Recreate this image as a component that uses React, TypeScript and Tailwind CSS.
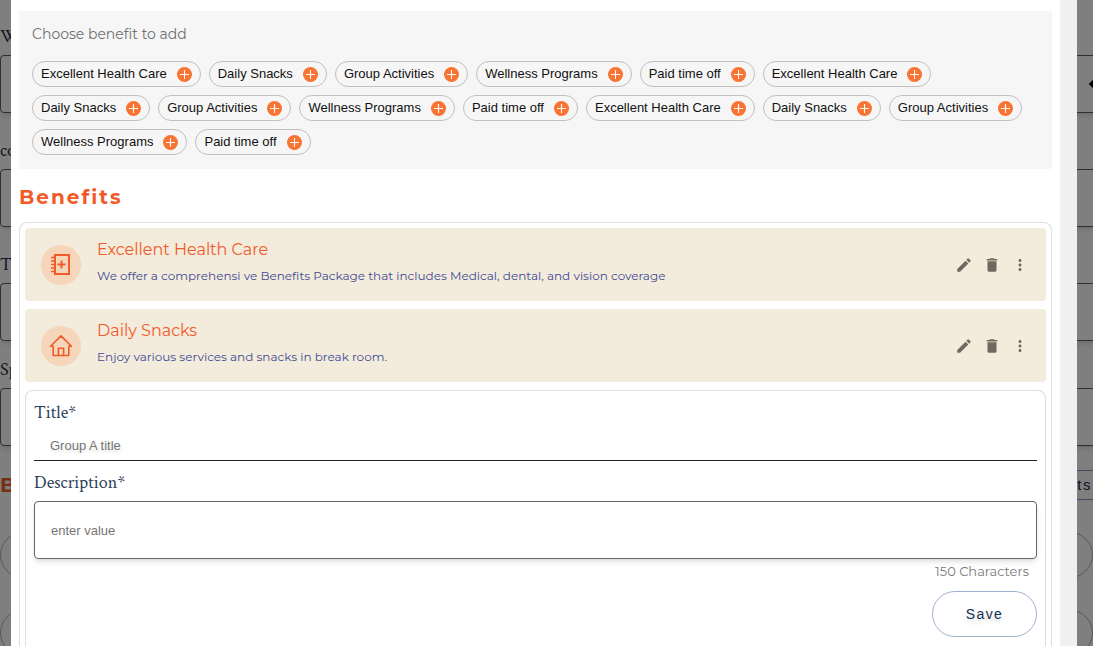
import type { ReactNode } from "react";
import { MdDelete, MdEdit, MdMoreVert } from "react-icons/md";

const display = "font-['Montserrat','Inter',sans-serif]";
const sans = "font-['Liberation_Sans',Arial,sans-serif]";
const serif = "font-['Crimson_Text','Crimson_Pro','Liberation_Serif',serif]";

const names = [
  "Excellent Health Care",
  "Daily Snacks",
  "Group Activities",
  "Wellness Programs",
  "Paid time off",
];
const choices = [...names, ...names, ...names];

function PlusDot() {
  return (
    <svg viewBox="0 0 15 15" className="size-[15px] shrink-0" aria-hidden="true">
      <circle cx="7.5" cy="7.5" r="7.5" fill="#f97432" />
      <path d="M7.5 3v9M3 7.5h9" stroke="#fff" strokeWidth="1.1" />
    </svg>
  );
}

function HealthBook() {
  return (
    <svg viewBox="0 0 24 24" className="size-6" fill="none" stroke="#f15a29" aria-hidden="true">
      <path d="M6 2h14v19H6z" strokeWidth="2" />
      <path d="M12.5 7.5v8M8.5 11.5h8" strokeWidth="1.9" />
      <path d="M2 4.5h4M2 8h4M2 11.5h4M2 15h4M2 18.5h4" strokeWidth="1.7" />
    </svg>
  );
}

function House() {
  return (
    <svg viewBox="0 0 24 24" className="size-6" fill="none" stroke="#f15a29" strokeWidth="1.6" aria-hidden="true">
      <path d="M4.2 12.2H1.6L12 1.9l10.4 10.3h-2.6v9.3H4.2z" strokeLinejoin="round" />
      <path d="M9.4 21.5v-7.3h5.2v7.3" />
    </svg>
  );
}

function BenefitCard({ icon, title, text }: { icon: ReactNode; title: string; text: string }) {
  return (
    <li className="flex items-center rounded bg-[#f3ebdb] py-2 pr-4 pl-4">
      <span className="flex size-10 shrink-0 items-center justify-center rounded-full bg-[#f5d6ba]">
        {icon}
      </span>
      <div className={`ml-4 flex-1 pb-1 ${display}`}>
        <h3 className="text-base leading-[27px] text-[#f15a29]">{title}</h3>
        <p className="text-xs leading-[26px] text-[#3f4b96]">{text}</p>
      </div>
      <div className="flex gap-2 text-[#6e6a62]">
        <button type="button" aria-label="Edit" className="p-px">
          <MdEdit className="size-[18px]" />
        </button>
        <button type="button" aria-label="Delete" className="p-px">
          <MdDelete className="size-[18px]" />
        </button>
        <button type="button" aria-label="More" className="p-px">
          <MdMoreVert className="size-[18px]" />
        </button>
      </div>
    </li>
  );
}

function PageField({ label, arrow }: { label: string; arrow?: boolean }) {
  return (
    <div>
      <div className={`h-8 text-lg leading-7 text-[#1b3049] ${serif}`}>{label}</div>
      <div className="-mr-4 flex h-[58px] items-center justify-end rounded border border-[#5f5f5f] bg-white pr-3 shadow-md">
        {arrow && <span className="size-1.5 rotate-45 bg-black" />}
      </div>
    </div>
  );
}

function Page() {
  return (
    <div className="flex flex-col bg-white pt-[23px]">
      <div className="flex flex-col gap-6">
        <PageField label="W" arrow />
        <PageField label="co" />
        <PageField label="Ty" />
      </div>
      <div className="mt-[15px]">
        <PageField label="Sp" />
      </div>
      <div className="mt-6 flex h-[30px] items-center justify-between">
        <span className={`text-xl font-bold text-[#f15a29] ${display}`}>B</span>
        <span className={`-mr-4 flex h-[30px] w-32 items-center justify-end border border-[#7d9cc0] pr-4 text-[15px] tracking-widest text-[#12304d] ${sans}`}>
          ts
        </span>
      </div>
      <div className="mt-8 h-[46px] rounded-full border border-[#b0b0b0]" />
      <div className="mt-8 h-[46px] rounded-full border border-[#b0b0b0]" />
    </div>
  );
}

export default function App() {
  return (
    <div className="relative h-screen overflow-hidden">
      <div aria-hidden="true">
        <Page />
      </div>
      <div className="absolute inset-0 flex bg-black/50 pr-4 pl-[11px]">
        <main className="flex flex-1 overflow-hidden bg-white">
          <div className="flex flex-1 flex-col px-2 pt-[11px]">
            <section className="bg-[#f6f6f6] px-[13px] pt-3 pb-3.5">
              <h2 className={`text-sm leading-[22px] text-[#707070] ${display}`}>
                Choose benefit to add
              </h2>
              <div className="mt-4 flex flex-wrap gap-2">
                {choices.map((name, i) => (
                  <button
                    key={i}
                    type="button"
                    className={`flex h-[26px] items-center gap-2.5 rounded-full border border-[#c0c0c0] px-2 text-[13px] text-[#111] ${sans}`}
                  >
                    {name}
                    <PlusDot />
                  </button>
                ))}
              </div>
            </section>

            <h1 className={`mt-[13px] mb-2.5 text-xl leading-[30px] font-bold tracking-widest text-[#f15a29] ${display}`}>
              Benefits
            </h1>

            <div className="flex flex-1 flex-col gap-2 rounded-t-lg border border-b-0 border-[#dedede] px-[5px] pt-[5px]">
              <ul className="flex flex-col gap-2">
                <BenefitCard
                  icon={<HealthBook />}
                  title="Excellent Health Care"
                  text="We offer a comprehensi ve Benefits Package that includes Medical, dental, and vision coverage"
                />
                <BenefitCard
                  icon={<House />}
                  title="Daily Snacks"
                  text="Enjoy various services and snacks in break room."
                />
              </ul>
              <form
                className="flex flex-1 flex-col rounded-t-lg border border-b-0 border-[#dedede] px-2 pt-2"
                onSubmit={(e) => e.preventDefault()}
              >
                <label htmlFor="title" className={`text-lg leading-7 text-[#2b4058] ${serif}`}>
                  Title*
                </label>
                <input
                  id="title"
                  placeholder="Group A title"
                  className={`h-[34px] border-b border-[#222] px-4 pt-1 text-[13px] outline-none text-shadow-[0_3px_6px_#00000029] placeholder:text-[#757575] ${sans}`}
                />
                <label htmlFor="description" className={`mt-2 text-lg leading-7 text-[#2b4058] ${serif}`}>
                  Description*
                </label>
                <textarea
                  id="description"
                  placeholder="enter value"
                  className={`mt-1 h-[58px] resize-none rounded border border-[#666] px-4 py-5 text-[13px] leading-[18px] shadow-md outline-none placeholder:text-[#757575] ${sans}`}
                />
                <p className={`pr-2 text-right text-[13px] leading-6 text-[#7a7a7a] ${display}`}>
                  150 Characters
                </p>
                <button
                  type="submit"
                  className={`mt-2 h-[46px] w-[105px] self-end rounded-full border border-[#9db2cf] text-sm tracking-widest text-[#12304d] text-shadow-[0_3px_6px_#00000029] ${sans}`}
                >
                  Save
                </button>
              </form>
            </div>
          </div>
          <div className="w-[17px] shrink-0 bg-[#f0f0f0]" />
        </main>
      </div>
    </div>
  );
}
